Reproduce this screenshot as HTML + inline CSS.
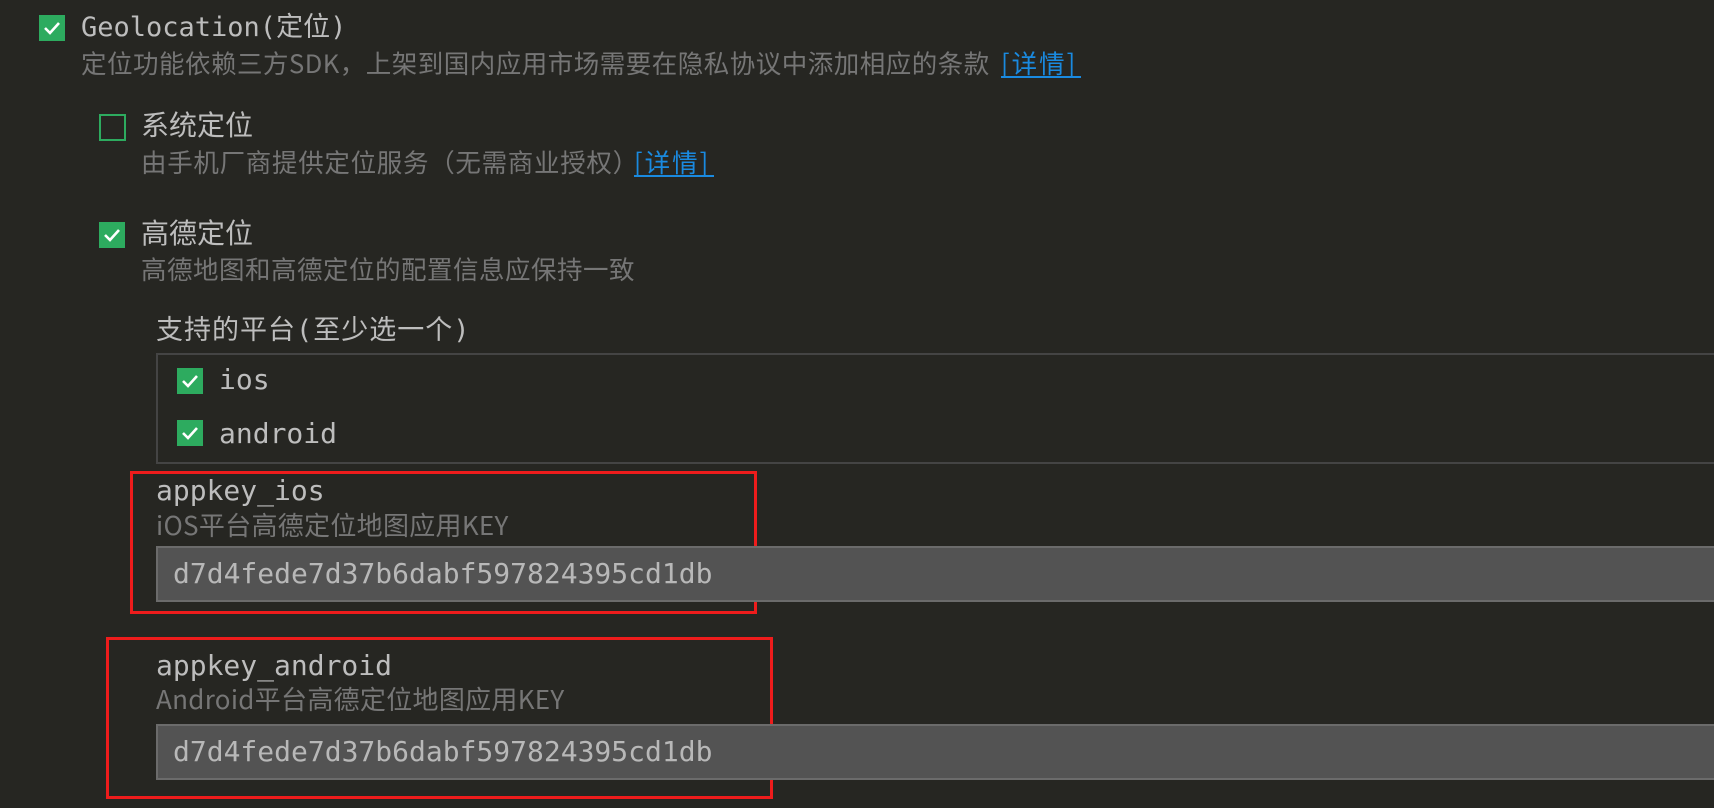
<!DOCTYPE html>
<html><head><meta charset="utf-8"><style>
html,body{margin:0;padding:0;}
body{width:1714px;height:808px;background:#262622;position:relative;overflow:hidden;font-family:"DejaVu Sans Mono","Noto Sans CJK SC",monospace;}
.a{position:absolute;white-space:nowrap;line-height:1;}
.t{color:#bdbdbd;font-size:27px;}
.d{color:#767676;font-size:25.5px;letter-spacing:0.5px;font-family:"Noto Sans CJK SC",sans-serif;}
.lk{position:absolute;white-space:nowrap;line-height:1;color:#1a8ae0;border-bottom:2px solid #1a8ae0;font-size:25.5px;letter-spacing:2px;font-family:"Noto Sans CJK SC",sans-serif;width:80px;}
.cb{position:absolute;width:26px;height:26px;background:#2dab5f;}
.cb svg{position:absolute;left:4px;top:5px;}
.ce{position:absolute;width:23px;height:23px;border:2px solid #2dab5f;}
.rb{position:absolute;border:3px solid #ee1c1c;}
.inp{position:absolute;left:156px;right:-4px;background:#535353;border:2px solid #6b6b6b;box-sizing:border-box;}
.inp span{position:absolute;left:15px;top:50%;transform:translateY(-50%);color:#b8b8b8;font-size:28px;line-height:1;}
</style></head><body>

<div class="cb" style="left:39px;top:15px"><svg width="18" height="16" viewBox="0 0 18 16"><path d="M2 8 L7 13 L16 3" stroke="#fff" stroke-width="2.6" fill="none"/></svg></div>
<div class="a t" style="left:81px;top:14px">Geolocation(定位)</div>
<div class="a d" style="left:81px;top:50px">定位功能依赖三方SDK，上架到国内应用市场需要在隐私协议中添加相应的条款</div>
<div class="lk" style="left:1001px;top:50px">[详情]</div>

<div class="ce" style="left:99px;top:114px"></div>
<div class="a t" style="left:141px;top:112px;font-size:28px">系统定位</div>
<div class="a d" style="left:141px;top:149px;letter-spacing:0.7px">由手机厂商提供定位服务（无需商业授权）</div>
<div class="lk" style="left:634px;top:149px">[详情]</div>

<div class="cb" style="left:99px;top:222px"><svg width="18" height="16" viewBox="0 0 18 16"><path d="M2 8 L7 13 L16 3" stroke="#fff" stroke-width="2.6" fill="none"/></svg></div>
<div class="a t" style="left:141px;top:220px;font-size:28px">高德定位</div>
<div class="a d" style="left:141px;top:256px">高德地图和高德定位的配置信息应保持一致</div>

<div class="a t" style="left:156px;top:317px;font-size:27px;letter-spacing:1px">支持的平台(至少选一个)</div>
<div style="position:absolute;left:156px;top:353px;right:-4px;height:111px;border:2px solid #444;box-sizing:border-box"></div>
<div class="cb" style="left:177px;top:368px"><svg width="18" height="16" viewBox="0 0 18 16"><path d="M2 8 L7 13 L16 3" stroke="#fff" stroke-width="2.6" fill="none"/></svg></div>
<div class="a t" style="left:219px;top:366px;font-size:28px">ios</div>
<div class="cb" style="left:177px;top:420px"><svg width="18" height="16" viewBox="0 0 18 16"><path d="M2 8 L7 13 L16 3" stroke="#fff" stroke-width="2.6" fill="none"/></svg></div>
<div class="a t" style="left:219px;top:420px;font-size:28px">android</div>

<div class="rb" style="left:130px;top:471px;width:621px;height:137px"></div>
<div class="a t" style="left:156px;top:477px;font-size:28px">appkey_ios</div>
<div class="a d" style="left:156px;top:512px;font-size:26px;letter-spacing:0.3px">iOS平台高德定位地图应用KEY</div>
<div class="inp" style="top:546px;height:56px"><span>d7d4fede7d37b6dabf597824395cd1db</span></div>

<div class="rb" style="left:106px;top:637px;width:661px;height:156px"></div>
<div class="a t" style="left:156px;top:652px;font-size:28px">appkey_android</div>
<div class="a d" style="left:156px;top:686px;font-size:26px;letter-spacing:0.3px">Android平台高德定位地图应用KEY</div>
<div class="inp" style="top:724px;height:56px"><span>d7d4fede7d37b6dabf597824395cd1db</span></div>

</body></html>
